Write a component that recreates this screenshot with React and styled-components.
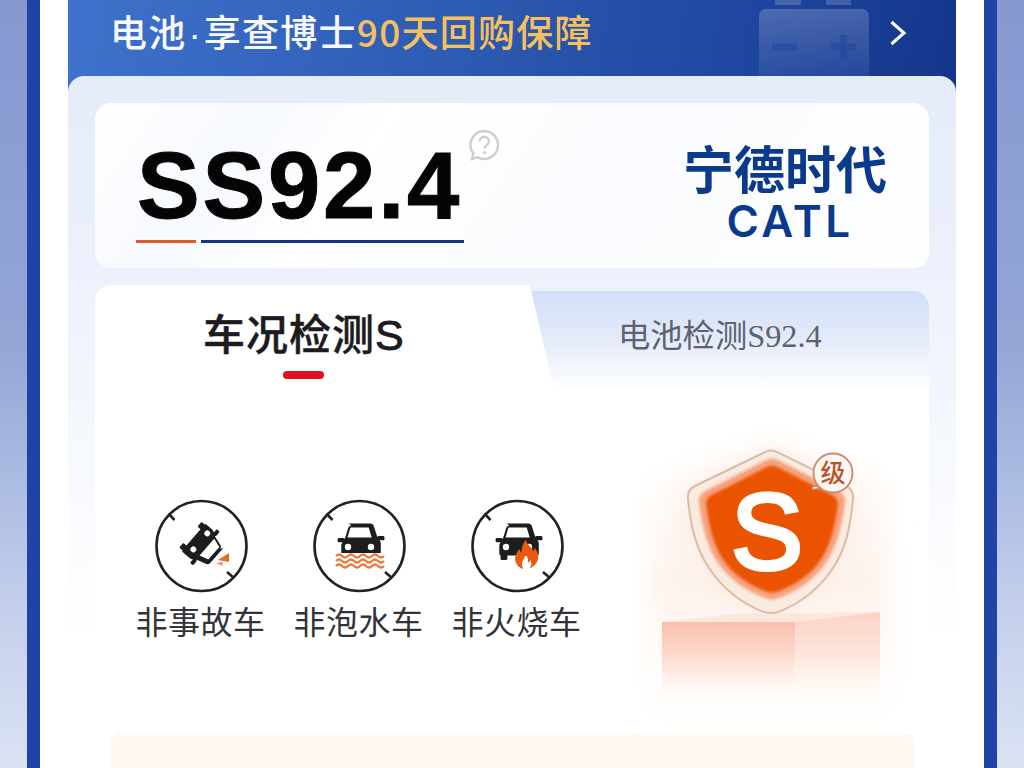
import React from 'react'
import styled, { createGlobalStyle } from 'styled-components'

const GlobalStyle = createGlobalStyle`
  html, body {
    margin: 0;
    padding: 0;
    background: #fff;
  }
  * {
    box-sizing: border-box;
  }
`

const cjk = `'Noto Sans CJK SC', 'Noto Sans', sans-serif`

const Page = styled.div`
  display: flex;
  width: 1024px;
  height: 768px;
  overflow: hidden;
  font-family: ${cjk};
`
const SideBleed = styled.div`
  flex: 1;
  background: linear-gradient(180deg, #8599d0 0%, #93a6d6 45%, #c5d0ec 80%, #dbe2f4 100%);
`
const Frame = styled.div`
  width: 970px;
  flex: none;
  padding: 0 28px;
  background: #fff;
  border-left: 13px solid #1f43a6;
  border-right: 13px solid #1f43a6;
`
const Banner = styled.div`
  position: relative;
  display: flex;
  align-items: center;
  height: 92px;
  margin-bottom: -16px;
  padding: 0 49px 26px 42px;
  background: linear-gradient(100deg, #3f72cc 0%, #2f5db5 40%, #1f479f 75%, #15358c 100%);
  overflow: hidden;
`
const BannerText = styled.div`
  flex: 1;
  font-size: 37px;
  font-weight: 500;
  line-height: 60px;
  letter-spacing: 1.25px;
  color: #f7f9ff;
  white-space: nowrap;
`
const Dot = styled.span`
  font-family: 'Liberation Sans', Arial, sans-serif;
  letter-spacing: 0;
  margin: 0 3px 0 2px;
`
const Gold = styled.span`
  color: #f5c05d;
`
const BatteryMark = styled.svg`
  position: absolute;
  left: 683px;
  top: -6px;
`
const Chevron = styled.svg`
  flex: none;
`
const Card = styled.div`
  position: relative;
  padding: 27px 27px 0;
  border-radius: 16px 16px 0 0;
  background: linear-gradient(180deg, #e5ecf9 0, #ecf1fb 200px, #f5f8fd 360px, #fff 560px);
`
const ScoreCard = styled.div`
  display: flex;
  justify-content: space-between;
  height: 165px;
  padding: 36px 42px 0 41px;
  border-radius: 16px;
  background: linear-gradient(125deg, #fff 0%, #f6f9fe 18%, #fff 32%, #f9fbfe 60%, #fff 100%);
`
const ScoreBlock = styled.div`
  position: relative;
`
const ScoreValue = styled.div`
  font-family: 'Liberation Sans', Arial, sans-serif;
  font-size: 94px;
  font-weight: 700;
  line-height: 93px;
  letter-spacing: 2.8px;
  -webkit-text-stroke: 1px #050505;
  color: #050505;
  padding-left: 1px;
  white-space: nowrap;
`
const Underlines = styled.div`
  display: flex;
  gap: 5px;
  margin-top: 8px;
`
const Underline = styled.div`
  height: 3px;
  width: ${props => props.width}px;
  background: ${props => props.color};
`
const HelpIcon = styled.svg`
  position: absolute;
  left: 332px;
  top: -10px;
`
const Brand = styled.div`
  display: flex;
  flex-direction: column;
  align-items: center;
  margin-top: 2px;
  color: #0b3a8c;
`
const BrandName = styled.div`
  font-size: 51px;
  font-weight: 700;
  line-height: 52px;
  white-space: nowrap;
`
const BrandLatin = styled.div`
  font-family: Inter, 'Open Sans', sans-serif;
  font-size: 44px;
  font-weight: 600;
  line-height: 36px;
  letter-spacing: 3.4px;
  margin-top: 10px;
  padding-left: 10px;
`
const Tabs = styled.div`
  display: flex;
  margin-top: 17px;
  height: 105px;
`
const ActiveTab = styled.div`
  position: relative;
  z-index: 1;
  flex: none;
  width: 434px;
  padding: 19px 0 0 108px;
  background: #fff;
  border-radius: 16px 0 0 0;

  &::after {
    content: '';
    position: absolute;
    top: 0;
    bottom: 0;
    right: -13px;
    width: 26px;
    background: #fff;
    border-radius: 8px 0 0 0;
    transform: skewX(13deg);
  }
`
const ActiveLabel = styled.div`
  font-size: 42px;
  font-weight: 500;
  line-height: 56px;
  color: #1c1c1e;
  -webkit-text-stroke: 0.5px #1c1c1e;
  white-space: nowrap;
  letter-spacing: 1px;
`
const LatinBold = styled.span`
  font-family: 'Liberation Sans', Arial, sans-serif;
  font-weight: 400;
  font-size: 43px;
  -webkit-text-stroke: 0.9px #1c1c1e;
  letter-spacing: 0;
`
const ActiveBar = styled.div`
  width: 41px;
  height: 8px;
  margin: 8px 0 0 80px;
  border-radius: 4px;
  background: #e60e21;
`
const InactiveTab = styled.div`
  flex: 1;
  margin-top: 6px;
  padding: 17px 0 0 89px;
  border-radius: 0 16px 0 0;
  background: linear-gradient(180deg, #d2dff8 0%, #e4ebfa 50%, #fff 100%);
`
const InactiveLabel = styled.div`
  font-family: 'Liberation Serif', ${cjk};
  font-size: 32.3px;
  line-height: 56px;
  color: #5d6270;
  white-space: nowrap;
`
const TabBody = styled.div`
  display: flex;
  justify-content: space-between;
  height: 343px;
  padding: 109px 0 0 41px;
  background: #fff;
`
const Checks = styled.div`
  display: flex;
  gap: 29px;
  align-items: flex-start;
`
const CheckItem = styled.div`
  display: flex;
  flex-direction: column;
  align-items: center;
  width: 129px;
`
const CheckIcon = styled.svg`
  display: block;
  margin-left: 2px;
`
const CheckLabel = styled.div`
  margin-top: 3px;
  font-size: 32px;
  line-height: 48px;
  letter-spacing: 0.5px;
  color: #33343a;
  white-space: nowrap;
`
const ShieldStage = styled.svg`
  flex: none;
  margin: -79px 9px 0 0;
  align-self: flex-start;
`
const Perks = styled.div`
  height: 60px;
  margin: 0 14px 0 15px;
  border-radius: 10px 10px 0 0;
  background: #fff8f0;
`

const CarShape = ({ light = '#fff' }) => (
  <g>
    <path d="M35.500 24.500h22c1.600 0 2.800.9 3.300 2.400l3.400 10.900 1.500-.9h4.300c.9 0 1.500.7 1.500 1.500v1.300c0 .9-.6 1.600-1.500 1.600h-3.600c1 1 1.400 2.200 1.400 3.600v10.200c0 .7-.5 1.200-1.200 1.200v3.200c0 .8-.6 1.400-1.400 1.400h-4c-.8 0-1.400-.6-1.400-1.400v-3H36.400v3c0 .8-.6 1.400-1.400 1.400h-4.100c-.8 0-1.400-.6-1.400-1.400v-3.200c-.7 0-1.200-.5-1.200-1.200V46.900c0-1.400.5-2.600 1.400-3.600h-3.600c-.9 0-1.500-.7-1.500-1.600v-1.300c0-.8.6-1.500 1.500-1.500h4.300l1.500.9 3.300-10.900c.5-1.500 1.800-2.400 3.300-2.400z" fill="#1d1d20" />
    <path d="M37.500 28.500h18.200l3 10H34.500z" fill={light} />
    <circle cx="35" cy="48" r="3.200" fill={light} />
    <circle cx="58" cy="48" r="3.200" fill={light} />
  </g>
)

const IconBase = ({ children }) => (
  <CheckIcon width="93" height="94" viewBox="0 0 93 94">
    <circle cx="46.500" cy="47" r="45" fill="#fff" stroke="#222226" strokeWidth="2.600" />
    <path d="M13.500 14.500l6 6.500M72 73l7 6" stroke="#222226" strokeWidth="2.600" fill="none" />
    {children}
  </CheckIcon>
)

const AccidentIcon = () => (
  <IconBase>
    <g transform="translate(3 4) rotate(131 46.500 42) translate(46.500 42) scale(.92) translate(-46.500 -42)">
      <CarShape />
    </g>
    <path d="M74 54L63 61l11 2z" fill="#ea6a22" />
    <path d="M61 64l7-1-1 4z" fill="#f0915a" />
  </IconBase>
)

const FloodIcon = () => (
  <IconBase>
    <CarShape />
    <rect x="22" y="54" width="50" height="16" fill="#fff" />
    <path
      d="M23 57q3-3 6 0t6 0 6 0 6 0 6 0 6 0 6 0 6 0M23 62q3-3 6 0t6 0 6 0 6 0 6 0 6 0 6 0 6 0M23 67q3-3 6 0t6 0 6 0 6 0 6 0 6 0 6 0 6 0"
      stroke="#ea7a3c"
      strokeWidth="2.200"
      fill="none"
    />
  </IconBase>
)

const FireIcon = () => (
  <IconBase>
    <CarShape />
    <path
      d="M55 41c1 5 5.500 7 7.500 11 .9-1 1.200-2.200 1.200-3.500 3 4 4.300 8 3.200 12-1 4-4.500 7.500-8.400 9 2-2.500 2.500-5.500 1-8.500-.6 1.500-1.500 2.300-2.800 2.800 .8-3.500-.3-6.500-2.700-8.800 .3 3.500-1.500 5-2.600 7.500-1 2.500-.6 5 1 7.500-4-1-7-4-8-8-1-4.500 1-8.500 4-12 .3 1.600.9 2.800 2 3.800 0-5.500 1.500-9.500 4.600-13.300z"
      fill="#e9590f"
    />
  </IconBase>
)

const checks = [
  { id: 'accident', label: '非事故车', Icon: AccidentIcon },
  { id: 'flood', label: '非泡水车', Icon: FloodIcon },
  { id: 'fire', label: '非火烧车', Icon: FireIcon }
]

const shieldOuter =
  'M143 33Q151 28 159 33L226 66Q234 70 233 79C230 110 225 130 213 148C200 168 180 184 158 192Q151 194 144 192C122 184 102 168 89 148C77 130 71 110 68 79Q67 70 75 66Z'
const shieldInner =
  'M146 40Q152 37 158 40L219 71Q226 75 225 82C222 108 216 130 204 146C192 162 174 173 156 179Q152 180 148 179C130 173 112 162 100 146C88 130 82 108 79 82Q78 75 85 71Z'

const ShieldArt = () => (
  <ShieldStage width="300" height="320" viewBox="0 0 300 320">
    <defs>
      <linearGradient id="glowFade" x1="0" y1="0" x2="0" y2="1">
        <stop offset="0" stopColor="#fef4ee" stopOpacity="0.3" />
        <stop offset="0.5" stopColor="#fdf0e9" stopOpacity="0.85" />
        <stop offset="1" stopColor="#fff6f0" stopOpacity="0" />
      </linearGradient>
      <linearGradient id="frontFade" x1="0" y1="0" x2="0" y2="1">
        <stop offset="0" stopColor="#f9bfac" />
        <stop offset="0.55" stopColor="#fde3d9" />
        <stop offset="1" stopColor="#fff6f1" stopOpacity="0" />
      </linearGradient>
      <linearGradient id="sideFade" x1="0" y1="0" x2="0" y2="1">
        <stop offset="0" stopColor="#fcd3c5" />
        <stop offset="0.55" stopColor="#fde8df" />
        <stop offset="1" stopColor="#fff6f1" stopOpacity="0" />
      </linearGradient>
      <filter id="softEdge" x="-10%" y="-10%" width="120%" height="120%">
        <feGaussianBlur stdDeviation="1.500" />
      </filter>
      <filter id="softGlow" x="-20%" y="-20%" width="140%" height="140%">
        <feGaussianBlur stdDeviation="12" />
      </filter>
    </defs>
    <path d="M35 60L150 15l115 45 12 250H25z" fill="url(#glowFade)" filter="url(#softGlow)" />
    <path d="M42 202l68-8 150-2-85 10z" fill="#fde8de" />
    <path d="M42 202h133v78H42z" fill="url(#frontFade)" />
    <path d="M175 202l85-10v88h-85z" fill="url(#sideFade)" />
    <path d={shieldOuter} fill="#f9d5c4" filter="url(#softGlow)" opacity="0.4" />
    <path d={shieldOuter} fill="#f9ebe0" stroke="#d9bda6" strokeWidth="2" />
    <path d={shieldInner} fill="#f7a27f" filter="url(#softEdge)" />
    <path d={shieldInner} transform="translate(152 110) scale(.9) translate(-152 -110)" fill="#ea5306" filter="url(#softEdge)" />
    <text
      x="147"
      y="149"
      textAnchor="middle"
      fontFamily="'Liberation Sans', Arial, sans-serif"
      fontSize="108"
      fill="#fff"
      stroke="#fff"
      strokeWidth="4"
    >
      S
    </text>
    <path d="M194 66c-3 2-2 4 2 3l8-1z" fill="#fff7f2" stroke="#c98a68" strokeWidth="1.500" />
    <circle cx="213" cy="53" r="19.500" fill="#fff7f2" stroke="#c98a68" strokeWidth="1.800" />
    <text x="213" y="62" textAnchor="middle" fontFamily={cjk} fontSize="25" fontWeight="500" fill="#b6552b">
      级
    </text>
  </ShieldStage>
)

export default function App() {
  return (
    <Page>
      <GlobalStyle />
      <SideBleed />
      <Frame>
        <Banner>
          <BannerText>
            电池<Dot>·</Dot>享查博士<Gold>90天回购保障</Gold>
          </BannerText>
          <BatteryMark width="120" height="90" viewBox="0 0 120 90">
            <defs>
              <linearGradient id="batteryFade" x1="0" y1="0" x2="0" y2="1">
                <stop offset="0" stopColor="#fff" stopOpacity="0.2" />
                <stop offset="1" stopColor="#fff" stopOpacity="0.04" />
              </linearGradient>
            </defs>
            <rect x="24" y="0" width="26" height="11" fill="#fff" fillOpacity="0.18" />
            <rect x="75" y="0" width="25" height="11" fill="#fff" fillOpacity="0.18" />
            <rect x="8" y="15" width="110" height="75" rx="7" fill="url(#batteryFade)" />
            <path d="M21 53h25M80 53h25M92.500 41v25" stroke="#1f479f" strokeOpacity="0.6" strokeWidth="7" fill="none" />
          </BatteryMark>
          <Chevron width="18" height="26" viewBox="0 0 18 26">
            <path d="M2.500 2l12.500 11-12.500 11" stroke="#fff" strokeWidth="3" fill="none" />
          </Chevron>
        </Banner>
        <Card>
          <ScoreCard>
            <ScoreBlock>
              <ScoreValue>SS92.4</ScoreValue>
              <Underlines>
                <Underline width={60} color="#e0592f" />
                <Underline width={263} color="#163384" />
              </Underlines>
              <HelpIcon width="32" height="32" viewBox="0 0 32 32">
                <path
                  d="M16 2a14 14 0 1 1-6.500 26.400L4 30l1.400-5.500A14 14 0 0 1 16 2z"
                  fill="#fff"
                  stroke="#cfcfcf"
                  strokeWidth="2.500"
                />
                <path d="M11.500 12.500c0-6 9.500-6 9.500 0 0 3.500-4.500 3.500-4.500 7" fill="none" stroke="#cfcfcf" strokeWidth="2.400" />
                <circle cx="16.500" cy="23.500" r="1.600" fill="#cfcfcf" />
              </HelpIcon>
            </ScoreBlock>
            <Brand>
              <BrandName>宁德时代</BrandName>
              <BrandLatin>CATL</BrandLatin>
            </Brand>
          </ScoreCard>
          <Tabs>
            <ActiveTab>
              <ActiveLabel>
                车况检测<LatinBold>S</LatinBold>
              </ActiveLabel>
              <ActiveBar />
            </ActiveTab>
            <InactiveTab>
              <InactiveLabel>电池检测S92.4</InactiveLabel>
            </InactiveTab>
          </Tabs>
          <TabBody>
            <Checks>
              {checks.map(({ id, label, Icon }) => (
                <CheckItem key={id}>
                  <Icon />
                  <CheckLabel>{label}</CheckLabel>
                </CheckItem>
              ))}
            </Checks>
            <ShieldArt />
          </TabBody>
          <Perks />
        </Card>
      </Frame>
      <SideBleed />
    </Page>
  )
}
